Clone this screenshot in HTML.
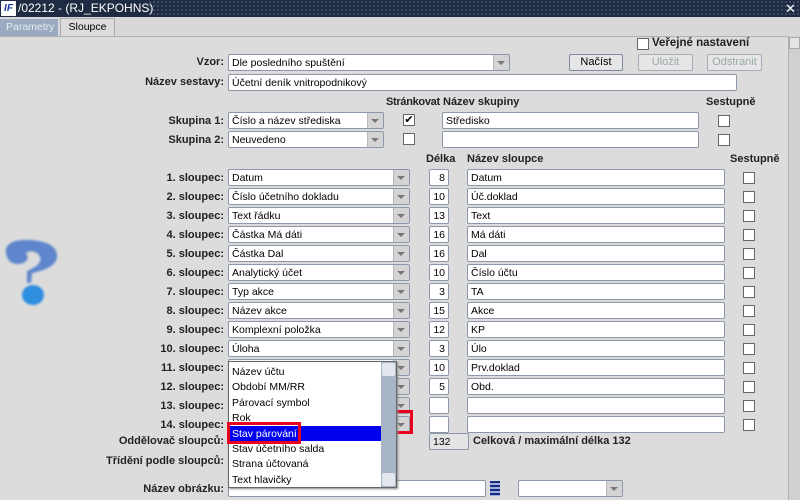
<!DOCTYPE html>
<html><head><meta charset="utf-8"><style>
*{box-sizing:border-box;margin:0;padding:0}
body{width:800px;height:500px;overflow:hidden;background:#dcdcdc;font-family:"Liberation Sans",sans-serif;font-size:11px;color:#000;position:relative}
.a{position:absolute}
.lb{position:absolute;font-weight:bold;text-align:right;width:224px;left:0;color:#222}
.hd{position:absolute;font-weight:bold;color:#222}
.in{position:absolute;background:#fff;border:1px solid #8c98a8;border-radius:2px;height:17px;padding:1px 3px;line-height:14px;white-space:nowrap;overflow:hidden;font-size:10.5px}
.cb{position:absolute;background:#fff;border:1px solid #8c98a8;border-radius:2px;height:17px;padding:1px 3px;line-height:14px;white-space:nowrap;overflow:hidden;font-size:10.5px}
.cb:after{content:"";position:absolute;right:0;top:0;width:15px;height:15px;background:#d4d4d4;border-left:1px solid #b8b8b8}
.cb:before{content:"";position:absolute;right:4px;top:6px;border-left:4px solid transparent;border-right:4px solid transparent;border-top:4px solid #777;z-index:2}
.ck{position:absolute;width:12px;height:12px;background:#fff;border:1px solid #666}
.num{text-align:right}
.bt{position:absolute;height:17px;border:1px solid #7f8a9a;border-radius:2px;background:#e6e6e6;text-align:center;line-height:15px;font-size:11px}
</style></head><body>
<div class="a" style="left:0;top:0;width:800px;height:17px;background:#1f2b42;background-image:radial-gradient(#4a5670 0.8px,transparent 1px);background-size:4px 4px;"></div>
<div class="a" style="left:0;top:0;width:148px;height:17px;background:#1f2b42"></div>
<div class="a" style="left:1px;top:1px;width:15px;height:15px;background:#fff;color:#1a3aa0;font-weight:bold;font-style:italic;font-size:10px;line-height:15px;text-align:center">IF</div>
<div class="a" style="left:18px;top:1px;color:#fff;font-size:12px;line-height:15px">/02212 - (RJ_EKPOHNS)</div>
<div class="a" style="left:785px;top:0;color:#fff;font-size:13px;line-height:17px">✕</div>
<div class="a" style="left:0;top:17px;width:800px;height:19px;background:#d8d8d8"></div>
<div class="a" style="left:0;top:19px;width:58px;height:17px;background:#9aaac0;color:#e8ecf2;line-height:17px;padding-left:6px;font-size:10.5px">Parametry</div>
<div class="a" style="left:60px;top:18px;width:55px;height:19px;background:#dcdcdc;border:1px solid #aaa;border-bottom:none;line-height:17px;text-align:center;font-size:10.5px">Sloupce</div>
<div class="a" style="left:0;top:36px;width:800px;height:1px;background:#b0b0b0"></div>
<div class="a" style="left:788px;top:36px;width:12px;height:464px;background:#d0d0d0;border-left:1px solid #b0b0b0"></div>
<div class="a" style="left:789px;top:37px;width:11px;height:12px;background:#e4e4e4;border:1px solid #aaa"></div>

<!-- question mark -->
<svg class="a" style="left:0;top:235px" width="70" height="75" viewBox="0 0 70 75">
<defs><filter id="b"><feGaussianBlur stdDeviation="1"/></filter></defs>
<g filter="url(#b)">
<path d="M6 18 C4 8 16 4 30 5 C48 6 58 12 57 22 C56 32 42 36 32 38 L31 48 L27 48 L27 36 C36 32 42 28 40 22 C38 16 30 15 26 18 C30 24 26 29 18 29 C10 29 7 24 6 18 Z" fill="#5f86cc"/>
<ellipse cx="33" cy="60" rx="11" ry="10" fill="#2f8ee0"/>
</g></svg>

<div class="ck" style="left:637px;top:38px"></div>
<div class="hd" style="left:652px;top:37px;font-size:11.5px">Veřejné nastavení</div>
<div class="lb" style="top:56px">Vzor:</div>
<div class="cb" style="left:228px;top:54px;width:282px">Dle posledního spuštění</div>
<div class="bt" style="left:569px;top:54px;width:54px">Načíst</div>
<div class="bt" style="left:638px;top:54px;width:55px;color:#9aa;border-color:#aab">Uložit</div>
<div class="bt" style="left:707px;top:54px;width:55px;color:#9aa;border-color:#aab">Odstranit</div>
<div class="lb" style="top:76px">Název sestavy:</div>
<div class="in" style="left:228px;top:74px;width:509px">Účetní deník vnitropodnikový</div>
<div class="hd" style="left:386px;top:96px;letter-spacing:-0.3px">Stránkovat</div>
<div class="hd" style="left:443px;top:96px">Název skupiny</div>
<div class="hd" style="left:706px;top:96px">Sestupně</div>
<div class="lb" style="top:115px">Skupina 1:</div>
<div class="cb" style="left:228px;top:112px;width:156px">Číslo a název střediska</div>
<div class="ck" style="left:403px;top:114px;font-size:11px;line-height:10px;text-align:center">✔</div>
<div class="in" style="left:442px;top:112px;width:257px">Středisko</div>
<div class="ck" style="left:718px;top:115px"></div>
<div class="lb" style="top:134px">Skupina 2:</div>
<div class="cb" style="left:228px;top:131px;width:156px">Neuvedeno</div>
<div class="ck" style="left:403px;top:133px"></div>
<div class="in" style="left:442px;top:131px;width:257px"></div>
<div class="ck" style="left:718px;top:134px"></div>

<div class="hd" style="left:426px;top:153px">Délka</div>
<div class="hd" style="left:467px;top:153px">Název sloupce</div>
<div class="hd" style="left:730px;top:153px">Sestupně</div>

<div class="lb" style="top:172px">1. sloupec:</div><div class="cb" style="left:228px;top:169px;width:182px">Datum</div><div class="in num" style="left:429px;top:169px;width:20px">8</div><div class="in" style="left:467px;top:169px;width:258px">Datum</div><div class="ck" style="left:743px;top:172px"></div>
<div class="lb" style="top:191px">2. sloupec:</div><div class="cb" style="left:228px;top:188px;width:182px">Číslo účetního dokladu</div><div class="in num" style="left:429px;top:188px;width:20px">10</div><div class="in" style="left:467px;top:188px;width:258px">Úč.doklad</div><div class="ck" style="left:743px;top:191px"></div>
<div class="lb" style="top:210px">3. sloupec:</div><div class="cb" style="left:228px;top:207px;width:182px">Text řádku</div><div class="in num" style="left:429px;top:207px;width:20px">13</div><div class="in" style="left:467px;top:207px;width:258px">Text</div><div class="ck" style="left:743px;top:210px"></div>
<div class="lb" style="top:229px">4. sloupec:</div><div class="cb" style="left:228px;top:226px;width:182px">Částka Má dáti</div><div class="in num" style="left:429px;top:226px;width:20px">16</div><div class="in" style="left:467px;top:226px;width:258px">Má dáti</div><div class="ck" style="left:743px;top:229px"></div>
<div class="lb" style="top:248px">5. sloupec:</div><div class="cb" style="left:228px;top:245px;width:182px">Částka Dal</div><div class="in num" style="left:429px;top:245px;width:20px">16</div><div class="in" style="left:467px;top:245px;width:258px">Dal</div><div class="ck" style="left:743px;top:248px"></div>
<div class="lb" style="top:267px">6. sloupec:</div><div class="cb" style="left:228px;top:264px;width:182px">Analytický účet</div><div class="in num" style="left:429px;top:264px;width:20px">10</div><div class="in" style="left:467px;top:264px;width:258px">Číslo účtu</div><div class="ck" style="left:743px;top:267px"></div>
<div class="lb" style="top:286px">7. sloupec:</div><div class="cb" style="left:228px;top:283px;width:182px">Typ akce</div><div class="in num" style="left:429px;top:283px;width:20px">3</div><div class="in" style="left:467px;top:283px;width:258px">TA</div><div class="ck" style="left:743px;top:286px"></div>
<div class="lb" style="top:305px">8. sloupec:</div><div class="cb" style="left:228px;top:302px;width:182px">Název akce</div><div class="in num" style="left:429px;top:302px;width:20px">15</div><div class="in" style="left:467px;top:302px;width:258px">Akce</div><div class="ck" style="left:743px;top:305px"></div>
<div class="lb" style="top:324px">9. sloupec:</div><div class="cb" style="left:228px;top:321px;width:182px">Komplexní položka</div><div class="in num" style="left:429px;top:321px;width:20px">12</div><div class="in" style="left:467px;top:321px;width:258px">KP</div><div class="ck" style="left:743px;top:324px"></div>
<div class="lb" style="top:343px">10. sloupec:</div><div class="cb" style="left:228px;top:340px;width:182px">Úloha</div><div class="in num" style="left:429px;top:340px;width:20px">3</div><div class="in" style="left:467px;top:340px;width:258px">Úlo</div><div class="ck" style="left:743px;top:343px"></div>
<div class="lb" style="top:362px">11. sloupec:</div><div class="cb" style="left:228px;top:359px;width:182px"></div><div class="in num" style="left:429px;top:359px;width:20px">10</div><div class="in" style="left:467px;top:359px;width:258px">Prv.doklad</div><div class="ck" style="left:743px;top:362px"></div>
<div class="lb" style="top:381px">12. sloupec:</div><div class="cb" style="left:228px;top:378px;width:182px"></div><div class="in num" style="left:429px;top:378px;width:20px">5</div><div class="in" style="left:467px;top:378px;width:258px">Obd.</div><div class="ck" style="left:743px;top:381px"></div>
<div class="lb" style="top:400px">13. sloupec:</div><div class="cb" style="left:228px;top:397px;width:182px"></div><div class="in num" style="left:429px;top:397px;width:20px"></div><div class="in" style="left:467px;top:397px;width:258px"></div><div class="ck" style="left:743px;top:400px"></div>
<div class="lb" style="top:419px">14. sloupec:</div><div class="cb" style="left:228px;top:416px;width:182px"></div><div class="in num" style="left:429px;top:416px;width:20px"></div><div class="in" style="left:467px;top:416px;width:258px"></div><div class="ck" style="left:743px;top:419px"></div>
<div class="a" style="left:391px;top:410px;width:22px;height:24px;border:3px solid #e8001c"></div>

<div class="lb" style="top:435px">Oddělovač sloupců:</div>
<div class="in" style="left:429px;top:433px;width:40px;background:#e4e4e4">132</div>
<div class="hd" style="left:473px;top:435px">Celková / maximální délka 132</div>
<div class="lb" style="top:455px">Třídění podle sloupců:</div>
<div class="lb" style="top:483px">Název obrázku:</div>
<div class="in" style="left:228px;top:480px;width:258px"></div>
<div class="a" style="left:490px;top:481px;width:10px;height:15px;background:repeating-linear-gradient(#1a2a80 0 2px,#9fb0e0 2px 4px)"></div>
<div class="cb" style="left:518px;top:480px;width:105px"></div>

<!-- dropdown list -->
<div class="a" style="left:228px;top:361px;width:169px;height:127px;background:#fff;border:1px solid #666;box-shadow:1px 1px 2px #888"></div>
<div class="a" style="left:381px;top:362px;width:15px;height:125px;background:#a8b4c8"></div>
<div class="a" style="left:382px;top:363px;width:13px;height:13px;background:#e4e8ee;border-radius:2px"></div>
<div class="a" style="left:382px;top:473px;width:13px;height:13px;background:#e4e8ee;border-radius:2px"></div>
<div class="a" style="left:229px;top:426px;width:152px;height:15px;background:#0000ee"></div>
<div class="a" style="left:232px;top:365px;font-size:10.5px;line-height:15.4px">Název účtu<br>Období MM/RR<br>Párovací symbol<br>Rok<br><span style="color:#fff">Stav párování</span><br>Stav účetního salda<br>Strana účtovaná<br>Text hlavičky</div>
<div class="a" style="left:227px;top:422px;width:74px;height:22px;border:3px solid #e8001c"></div>
</body></html>
